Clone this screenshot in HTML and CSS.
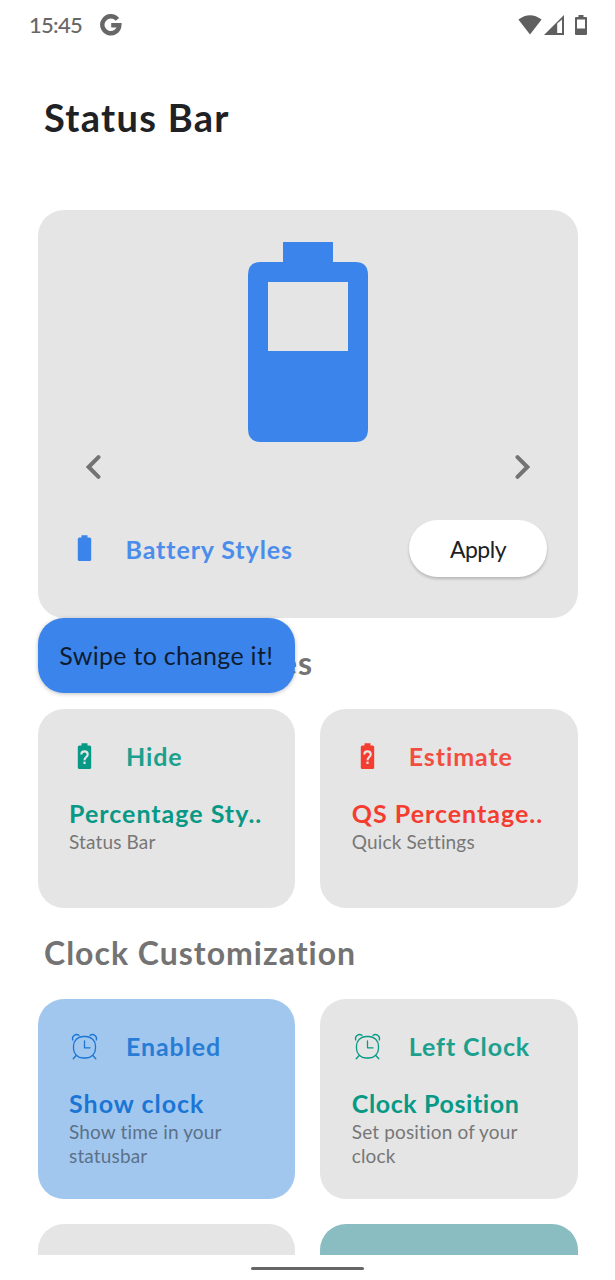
FILE: index.html
```
<!DOCTYPE html>
<html lang="en">
<head>
  <meta charset="utf-8">
  <title>Status Bar</title>
  <link rel="stylesheet" href="styles.css">
</head>
<body>
  <div class="statusbar">
    <span class="time">15:45</span>
    <svg class="google" viewBox="0 0 22 22"><path d="M17.4 5.4A8.5 8.5 0 1 0 19.3 11.3H11.2" fill="none" stroke="#676767" stroke-width="4.4"/></svg>
    <div class="system-icons">
      <svg width="24" height="20" viewBox="0 0 24 20"><path d="M.4 4.6Q12-4 23.6 4.6L12 19.6Z" fill="#5f5f5f"/></svg>
      <svg width="20" height="20" viewBox="0 0 20 20"><path fill-rule="evenodd" d="M0 20L20 0V20ZM13.2 8.4V18H18V4.4Z" fill="#5f5f5f"/></svg>
      <svg class="mini-battery" width="12" height="20" viewBox="0 0 12 20"><path fill-rule="evenodd" d="M3.5 0H8.5V2H11Q12 2 12 3V19Q12 20 11 20H1Q0 20 0 19V3Q0 2 1 2H3.5ZM2 4.5V13.5H10V4.5Z" fill="#5f5f5f"/></svg>
    </div>
  </div>

  <h1>Status Bar</h1>

  <div class="content">
    <div class="preview">
      <svg class="big-battery" viewBox="0 0 120 200"><path fill-rule="evenodd" d="M35 0H85V20H107Q120 20 120 33V187Q120 200 107 200H13Q0 200 0 187V33Q0 20 13 20H35ZM20 40V109H100V40Z" fill="#3b84ec"/></svg>
      <div class="arrows">
        <svg width="15" height="24" viewBox="0 0 15 24"><path d="M12.5 2.2L2.7 12L12.5 21.8"/></svg>
        <svg width="15" height="24" viewBox="0 0 15 24"><path d="M2.5 2.2L12.3 12L2.5 21.8"/></svg>
      </div>
      <div class="preview-footer">
        <svg class="icon blue" viewBox="0 0 31 31"><use href="#battery"/></svg>
        <span class="label blue">Battery Styles</span>
        <button class="apply">Apply</button>
      </div>
      <div class="tip">Swipe to change it!</div>
    </div>

    <h2>Percentage Styles</h2>
    <div class="grid">
      <div class="tile green">
        <div class="tile-head">
          <svg class="icon" viewBox="0 0 31 31"><use href="#battery"/><use href="#question"/></svg>
          <span class="label">Hide</span>
        </div>
        <h3>Percentage Sty..</h3>
        <p>Status Bar</p>
      </div>
      <div class="tile red">
        <div class="tile-head">
          <svg class="icon" viewBox="0 0 31 31"><use href="#battery"/><use href="#question"/></svg>
          <span class="label">Estimate</span>
        </div>
        <h3>QS Percentage..</h3>
        <p>Quick Settings</p>
      </div>
    </div>

    <h2>Clock Customization</h2>
    <div class="grid">
      <div class="tile enabled">
        <div class="tile-head">
          <svg class="icon" viewBox="0 0 31 31"><use href="#alarm"/></svg>
          <span class="label">Enabled</span>
        </div>
        <h3>Show clock</h3>
        <p>Show time in your<br>statusbar</p>
      </div>
      <div class="tile green">
        <div class="tile-head">
          <svg class="icon" viewBox="0 0 31 31"><use href="#alarm"/></svg>
          <span class="label">Left Clock</span>
        </div>
        <h3 class="position">Clock Position</h3>
        <p>Set position of your<br>clock</p>
      </div>
      <div class="tile"></div>
      <div class="tile teal"></div>
    </div>
  </div>

  <div class="navbar"><div class="pill"></div></div>

  <!-- shared icons -->
  <svg class="defs">
    <symbol id="battery" viewBox="0 0 31 31"><path d="M12.5 2.2H18.5V4.5H20.6Q22.2 4.5 22.2 6.1V26.4Q22.2 28 20.6 28H10.4Q8.8 28 8.8 26.4V6.1Q8.8 4.5 10.4 4.5H12.5Z" fill="currentColor"/></symbol>
    <symbol id="question" viewBox="0 0 31 31"><path d="M12.3 13.6C12.3 9.2 18.7 9.4 18.7 13.4C18.7 16 15.5 16 15.5 19.2" fill="none" stroke="#e5e5e5" stroke-width="2.1"/><rect x="14.4" y="20.6" width="2.2" height="2.4" fill="#e5e5e5"/></symbol>
    <symbol id="alarm" viewBox="0 0 31 31"><g fill="none" stroke="currentColor" stroke-width="1.3" stroke-linecap="round" stroke-linejoin="round"><rect x="4.5" y="5.5" width="22" height="21.5" rx="9.5"/><path d="M15.5 10V16.8H21M3.7 9C2.5 5.5 6.5 2 10 4.3M27.3 9C28.5 5.5 24.5 2 21 4.3M7.2 24.5L4.2 27.8M23.8 24.5L26.8 27.8"/></g></symbol>
  </svg>
</body>
</html>
```
FILE: styles.css
```
* {
  box-sizing: border-box;
}
body {
  margin: 0;
  height: 1280px;
  overflow: hidden;
  background: #fff;
  color: #202124;
  font-family: Lato, sans-serif;
}
svg {
  display: block;
}
h1, h2, h3, p {
  margin: 0;
  white-space: nowrap;
}
.statusbar {
  display: flex;
  align-items: center;
  height: 49px;
  padding: 0 28px 0 29px;
  color: #676767;
}
.time {
  width: 71px;
  font-size: 22px;
  font-weight: 500;
  letter-spacing: -.7px;
}
.google {
  width: 22px;
  height: 22px;
}
.system-icons {
  display: flex;
  gap: 2px;
  margin-left: auto;
}
.mini-battery {
  margin-left: 9px;
}
h1 {
  height: 161px;
  padding: 44px 44px 0;
  font-size: 38px;
  line-height: 48px;
  font-weight: 700;
  letter-spacing: 1.3px;
}
.content {
  height: 1045px;
  padding: 0 37px 0 37.5px;
  overflow: hidden;
}
.preview {
  position: relative;
  height: 407.5px;
  padding-top: 32px;
  background: #e5e5e5;
  border-radius: 26px;
}
.big-battery {
  width: 120px;
  height: 200px;
  margin: 0 auto;
}
.arrows {
  display: flex;
  justify-content: space-between;
  padding: 13px 48px 0;
}
.arrows path {
  fill: none;
  stroke: #737373;
  stroke-width: 4;
  stroke-linecap: round;
}
.preview-footer {
  display: flex;
  align-items: center;
  margin-top: 41px;
  padding: 0 31px;
}
.icon {
  width: 31px;
  height: 31px;
  margin-right: 26px;
}
.label {
  font-size: 25px;
  line-height: 30px;
  font-weight: 700;
  letter-spacing: .9px;
  opacity: .9;
}
.apply {
  width: 138px;
  height: 57px;
  margin-left: auto;
  border: 0;
  border-radius: 29px;
  background: #fff;
  color: #202124;
  font-family: inherit;
  font-size: 23px;
  letter-spacing: -.5px;
  box-shadow: 0 2px 3px rgba(0, 0, 0, .2);
}
/* floats over the heading below the preview */
.tip {
  position: absolute;
  top: 407.5px;
  left: 0;
  width: 257.5px;
  height: 75.5px;
  border-radius: 26px;
  background: #3b84ec;
  color: #0e1c30;
  font-size: 25px;
  line-height: 75px;
  letter-spacing: .3px;
  text-align: center;
  white-space: nowrap;
  box-shadow: 0 1px 4px rgba(0, 0, 0, .25);
}
h2 {
  height: 91px;
  padding-left: 6.5px;
  color: #737373;
  font-size: 32px;
  line-height: 90px;
  font-weight: 700;
  letter-spacing: 1px;
}
.grid {
  display: grid;
  grid-template-columns: 1fr 1fr;
  gap: 25.5px 25px;
}
.tile {
  height: 199.5px;
  padding: 32px 31.5px 0;
  border-radius: 26px;
  background: #e5e5e5;
}
.tile-head {
  display: flex;
}
.tile h3 {
  margin-top: 25px;
  font-size: 25px;
  line-height: 33px;
  font-weight: 700;
  letter-spacing: 1px;
}
.tile .position {
  letter-spacing: .6px;
}
.tile p {
  color: #777;
  font-size: 19px;
  line-height: 23.5px;
  letter-spacing: .15px;
}
.blue {
  color: #3b84ec;
}
.green {
  color: #079985;
}
.red {
  color: #f43d30;
}
.tile.enabled {
  background: #a2c7ee;
  color: #1a75d4;
}
.enabled p {
  color: #5b7189;
}
.tile.teal {
  background: #8abdc2;
}
.navbar {
  display: flex;
  justify-content: center;
  padding-top: 12px;
}
.pill {
  width: 113px;
  height: 3px;
  border-radius: 2px;
  background: #666;
}
.defs {
  display: none;
}
```
